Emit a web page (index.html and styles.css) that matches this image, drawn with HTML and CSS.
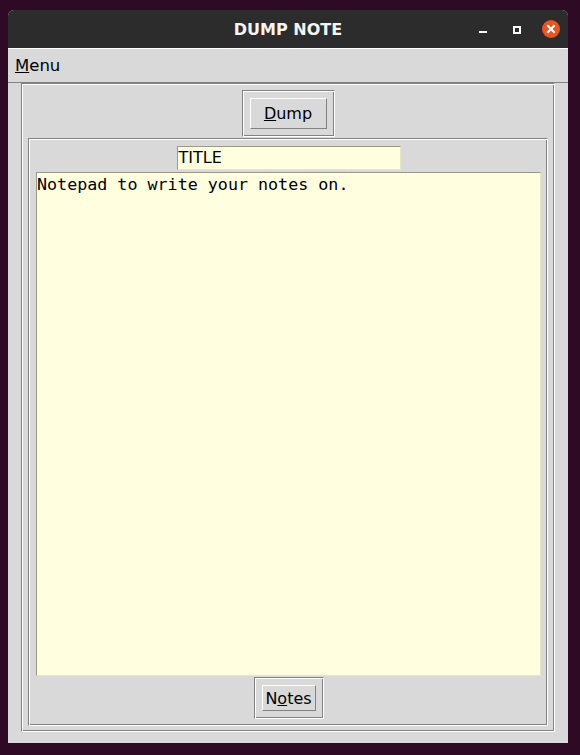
FILE: index.html
```html
<!DOCTYPE html>
<html lang="en">
<head>
<meta charset="utf-8">
<title>DUMP NOTE</title>
<link rel="stylesheet" href="styles.css">
</head>
<body>
<div class="window">
  <div class="titlebar">
    <div class="title">DUMP NOTE</div>
    <div class="controls">
      <span class="ctl"><span class="min"></span></span>
      <span class="ctl"><span class="max"></span></span>
      <span class="ctl">
        <svg class="close" width="18" height="18" viewBox="0 0 18 18" aria-hidden="true">
          <circle cx="9" cy="9" r="9" fill="#e95420"/>
          <path d="M5.3 5.3L12.7 12.7M12.7 5.3L5.3 12.7" stroke="#ffffff" stroke-width="2.2"/>
        </svg>
      </span>
    </div>
  </div>
  <div class="menubar"><span class="menu"><u>M</u>enu</span></div>
  <div class="content">
    <div class="groove outer">
      <div class="groove btnbox"><div class="btn dump"><u>D</u>ump</div></div>
      <div class="groove inner">
        <div class="entry">TITLE</div>
        <div class="textarea">Notepad to write your notes on.</div>
        <div class="groove btnbox"><div class="btn notes">N<u>o</u>tes</div></div>
      </div>
    </div>
  </div>
</div>
</body>
</html>
```
FILE: styles.css
```css
* { box-sizing: border-box; }
html, body { margin: 0; height: 100%; }
body {
  background: #2f0a24;
  font-family: "DejaVu Sans", sans-serif;
  font-size: 16px;
  color: #000;
  padding: 10px 0 0 8px;
}
.window {
  width: 560px;
  height: 733px;
  display: flex;
  flex-direction: column;
  background: #d9d9d9;
  border-radius: 6px 6px 0 0;
  overflow: hidden;
}
.titlebar {
  height: 38px;
  flex: none;
  background: #2c2c2c;
  display: grid;
  grid-template-columns: 1fr auto 1fr;
  align-items: center;
  color: #f4f4f4;
}
.title { grid-column: 2; font-weight: bold; font-size: 16px; }
.controls { grid-column: 3; justify-self: end; display: flex; height: 100%; }
.ctl { width: 34px; display: flex; align-items: center; justify-content: center; }
.min { width: 8px; height: 2px; background: #ffffff; margin-top: 6px; }
.max { width: 8px; height: 8px; border: 2px solid #ffffff; margin-top: 2px; }
.close { display: block; }

.menubar {
  height: 35px;
  flex: none;
  border-top: 1px solid #ffffff;
  border-bottom: 1px solid #828282;
  display: flex;
  align-items: center;
  padding-left: 7px;
}
.menu { font-size: 16.5px; }
u { text-decoration-thickness: 1px; }

.content {
  flex: 1;
  display: flex;
  flex-direction: column;
  padding: 0 13px 11px 13px;
}
.groove {
  border: 1px solid;
  border-color: #828282 #ffffff #ffffff #828282;
  box-shadow: inset 1px 1px 0 #ffffff, inset -1px -1px 0 #828282;
}
.outer {
  flex: 1;
  display: flex;
  flex-direction: column;
  align-items: center;
  gap: 1px;
  padding: 6px 6px 5px 6px;
}
.btnbox { padding: 7px; flex: none; }
.btn {
  display: flex;
  align-items: center;
  justify-content: center;
  border: 1px solid;
  border-color: #ffffff #828282 #828282 #ffffff;
  background: #d9d9d9;
}
.dump { width: 77px; height: 31px; }
.notes { width: 54px; height: 26px; }

.inner {
  flex: 1;
  align-self: stretch;
  display: flex;
  flex-direction: column;
  align-items: center;
  padding: 7px 6px 6px 7px;
}
.entry {
  width: 224px;
  height: 24px;
  flex: none;
  background: #ffffe0;
  border: 1px solid;
  border-color: #999986 #e5e5c9 #e5e5c9 #999986;
  padding-left: 1px;
  line-height: 22px;
  white-space: nowrap;
}
.textarea {
  flex: 1;
  align-self: stretch;
  margin: 2px 0 1px 0;
  background: #ffffe0;
  border: 1px solid;
  border-color: #999986 #e5e5c9 #e5e5c9 #999986;
  font-family: "DejaVu Sans Mono", monospace;
  font-size: 16.7px;
  padding: 1px 0 0 0;
  white-space: pre;
}
```
